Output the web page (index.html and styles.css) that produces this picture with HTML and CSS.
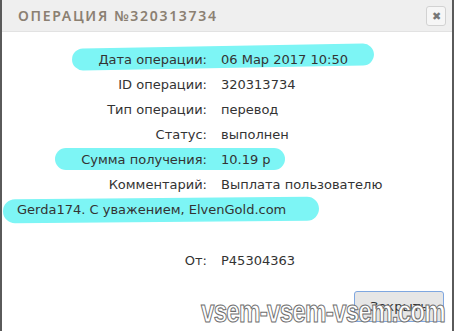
FILE: index.html
```html
<!DOCTYPE html>
<html lang="ru">
  <head>
    <meta charset="UTF-8" />
    <title>Операция №320313734</title>
    <link rel="stylesheet" href="styles.css">
  </head>
  <body>
    <div class="modal">
      <div class="modal-header">
        <h2 class="modal-title">Операция №320313734</h2>
        <button class="close-x" type="button">&#10006;</button>
      </div>

      <div class="modal-body">
        <!-- marker highlights -->
        <span class="marker marker-date"></span>
        <span class="marker marker-sum"></span>
        <span class="marker marker-comment"></span>

        <div class="row"><span class="label">Дата операции:</span><span class="value">06 Мар 2017 10:50</span></div>
        <div class="row"><span class="label">ID операции:</span><span class="value">320313734</span></div>
        <div class="row"><span class="label">Тип операции:</span><span class="value">перевод</span></div>
        <div class="row"><span class="label">Статус:</span><span class="value">выполнен</span></div>
        <div class="row"><span class="label">Сумма получения:</span><span class="value">10.19 р</span></div>
        <div class="row"><span class="label">Комментарий:</span><span class="value">Выплата пользователю Gerda174. С уважением, ElvenGold.com</span></div>
        <div class="row row-from"><span class="label">От:</span><span class="value">P45304363</span></div>
      </div>

      <div class="modal-footer">
        <button class="btn" type="button">Закрыть</button>
      </div>

      <div class="watermark">vsem-vsem-vsem.com</div>
    </div>
  </body>
</html>
```

FILE: styles.css
```css
html,
body {
  margin: 0;
  padding: 0;
  background: #fff;
}
body {
  font-family: "DejaVu Sans", sans-serif;
  color: #333;
}
.modal {
  position: relative;
  width: 450px;
  height: 331px;
  border-left: 2px solid #5a5a5a;
  border-right: 2px solid #5a5a5a;
  overflow: hidden;
}
.modal-header {
  height: 31px;
  background: #efefef;
  border-bottom: 1px solid #e2e2e2;
  display: flex;
  align-items: center;
  justify-content: space-between;
  padding: 0 6px 0 16px;
}
.modal-title {
  margin: 0;
  font-family: "Noto Sans", sans-serif;
  font-size: 14px;
  font-weight: 600;
  letter-spacing: 1.7px;
  text-transform: uppercase;
  color: #8b8072;
}
.close-x {
  width: 20px;
  height: 20px;
  padding: 0;
  border: 1px solid #d2d2d2;
  border-radius: 3px;
  background: #f6f6f6;
  color: #777;
  font-size: 11px;
  line-height: 18px;
}
.modal-body {
  position: relative;
  padding: 15px 10px 0 15px;
  font-size: 13px;
  line-height: 25px;
}
.row {
  position: relative;
  z-index: 1;
}
.row-from {
  margin-top: 26px;
}
.label {
  display: inline-block;
  width: 190px;
  text-align: right;
  margin-right: 14px;
}
.marker {
  position: absolute;
  z-index: 0;
  background: #7df5f5;
  border-radius: 12px;
}
.marker-date {
  left: 70px;
  top: 14px;
  width: 302px;
  height: 22px;
  transform: rotate(-1deg);
}
.marker-sum {
  left: 53px;
  top: 116px;
  width: 230px;
  height: 22px;
}
.marker-comment {
  left: 1px;
  top: 166px;
  width: 316px;
  height: 24px;
  transform: rotate(-0.5deg);
}
.modal-footer {
  display: flex;
  justify-content: flex-end;
  padding: 18px 8px 0 0;
}
.btn {
  width: 90px;
  height: 31px;
  border: 1px solid #7fa7e0;
  border-radius: 3px;
  background: #e6e6e6;
  color: #333;
  font-family: "DejaVu Sans", sans-serif;
  font-size: 13px;
}
.watermark {
  position: absolute;
  left: 199px;
  top: 296px;
  font-family: "Liberation Sans", sans-serif;
  font-size: 31px;
  line-height: 31px;
  font-weight: bold;
  letter-spacing: -1px;
  color: #fff;
  -webkit-text-stroke: 1.1px #6e6e6e;
  white-space: nowrap;
  transform: scaleX(0.78);
  transform-origin: left top;
}
```
